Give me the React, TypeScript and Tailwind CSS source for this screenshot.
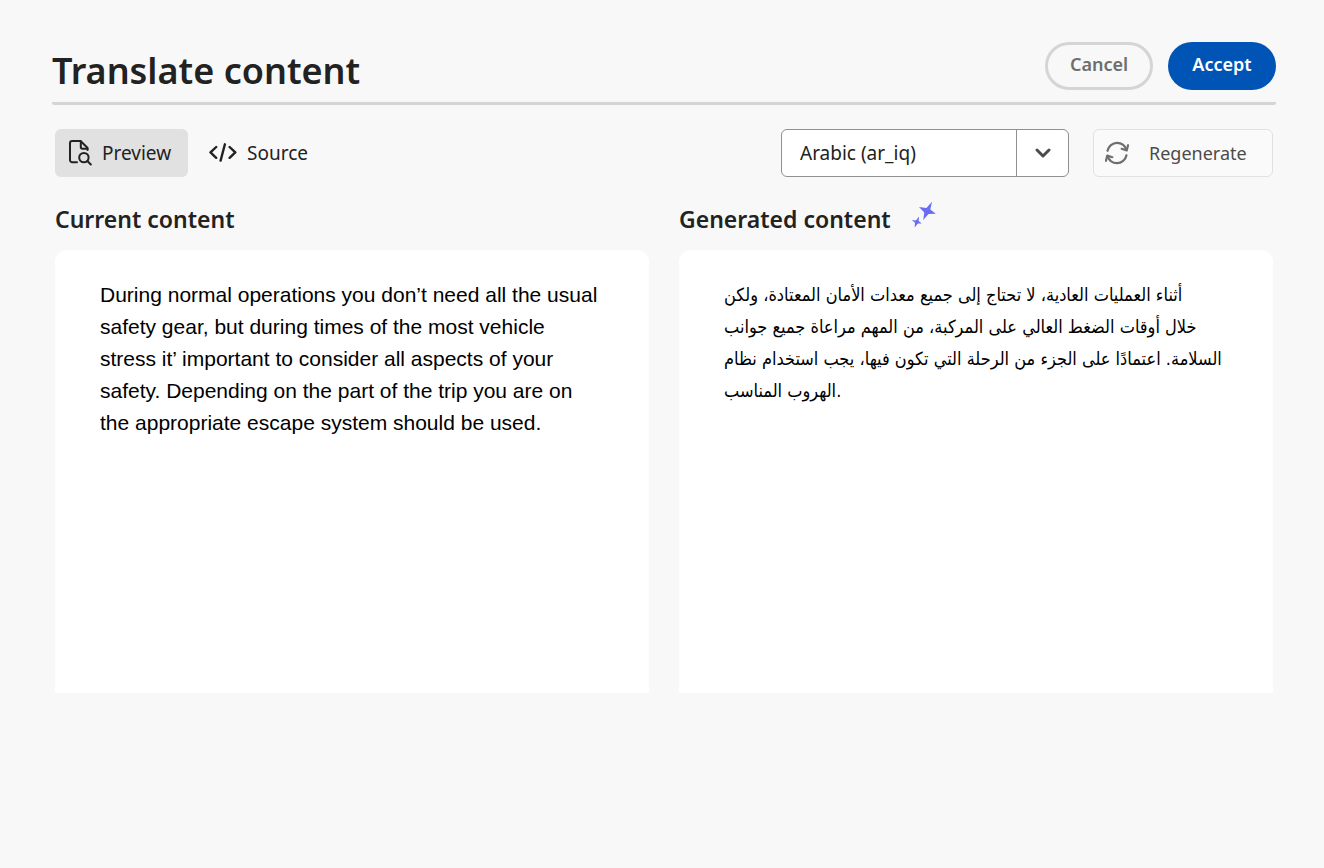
import { useState } from 'react';

const currentLines = [
  'During normal operations you don’t need all the usual',
  'safety gear, but during times of the most vehicle',
  'stress it’ important to consider all aspects of your',
  'safety. Depending on the part of the trip you are on',
  'the appropriate escape system should be used.',
];

const generatedLines = [
  'أثناء العمليات العادية، لا تحتاج إلى جميع معدات الأمان المعتادة، ولكن',
  'خلال أوقات الضغط العالي على المركبة، من المهم مراعاة جميع جوانب',
  'السلامة. اعتمادًا على الجزء من الرحلة التي تكون فيها، يجب استخدام نظام',
  'الهروب المناسب.',
];

function PreviewIcon() {
  return (
    <svg className="h-[26px] w-6 shrink-0" viewBox="0 0 24 26" fill="none" stroke="currentColor" strokeWidth="2" strokeLinecap="round" strokeLinejoin="round" aria-hidden="true">
      <path d="M9 22.300H4.200A2.200 2.200 0 0 1 2 20.100V3.200A2.200 2.200 0 0 1 4.200 1H12.600L19.600 8V10" />
      <path d="M12.800 1.500V7a1.800 1.800 0 0 0 1.800 1.800H19.300" />
      <circle cx="15.900" cy="17.600" r="4.700" />
      <path d="M19.400 21 22.800 24.500" />
    </svg>
  );
}

function SourceIcon() {
  return (
    <svg className="h-5 w-7 shrink-0" viewBox="0 0 28 20" fill="none" stroke="currentColor" strokeWidth="2.400" strokeLinecap="round" strokeLinejoin="round" aria-hidden="true">
      <path d="M7.200 4 1.500 9.400 7.200 14.800M20.600 4 26.300 9.400 20.600 14.800M15.900 1.300 11.600 17.600" />
    </svg>
  );
}

function RefreshIcon() {
  return (
    <svg className="size-6 shrink-0" viewBox="0 0 24 24" fill="none" stroke="currentColor" strokeWidth="2.200" strokeLinecap="round" strokeLinejoin="round" aria-hidden="true">
      <path d="M2.500 9.800C3.500 5.200 7.400 1.800 12 1.800c4.300 0 8 2.800 9.500 7" />
      <path d="M23.100 4.200 21.700 9.400 16.700 7.800" />
      <path d="M21.500 14.200C20.500 18.800 16.600 22.200 12 22.200c-4.300 0-8-2.800-9.500-7" />
      <path d="M.9 19.800 2.300 14.600 7.300 16.200" />
    </svg>
  );
}

function SparkleIcon() {
  return (
    <svg className="h-9 w-[25px] shrink-0 text-[#6a6cf4]" viewBox="0 0 25 36" fill="currentColor" aria-hidden="true">
      <path d="M21 .8L19.300 8.400L24.800 12.800L17.500 13L12.200 19L13.300 11.400L8 6L15.400 7Z" />
      <path d="M8 15.400L7.700 20L10.800 22.600L6.900 22.500L3.600 26.400L4 21.800L.8 19L4.900 19.400Z" />
    </svg>
  );
}

export default function App() {
  const [tab, setTab] = useState('preview');
  const tabClass = 'flex h-12 items-center gap-2.5 rounded-md px-[13px] text-[19px] text-[#222]';

  return (
    <div className="min-h-screen bg-[#f8f8f8] px-12 pt-[42px] font-['Noto_Sans','Open_Sans',sans-serif] text-[#222]">
      <header className="ml-1 flex h-[63px] items-start justify-between rounded-b-xs border-b-3 border-[#d5d5d5]">
        <h1 className="text-4xl leading-[58px] font-semibold">Translate content</h1>
        <div className="flex gap-[15px]">
          <button className="h-12 w-27 rounded-full border-3 border-[#d5d5d5] pb-1 text-lg font-semibold text-[#6e6e6e]">Cancel</button>
          <button className="h-12 w-27 rounded-full bg-[#0054b6] pb-1 text-lg font-semibold text-white">Accept</button>
        </div>
      </header>

      <main className="mr-[3px] ml-[7px]">
        <div className="mt-6 flex items-center justify-between">
          <div className="flex gap-2">
            <button aria-pressed={tab === 'preview'} onClick={() => setTab('preview')} className={`${tabClass} min-w-[133px] ${tab === 'preview' ? 'bg-[#e1e1e1]' : ''}`}>
              <PreviewIcon />
              Preview
            </button>
            <button aria-pressed={tab === 'source'} onClick={() => setTab('source')} className={`${tabClass} ${tab === 'source' ? 'bg-[#e1e1e1]' : ''}`}>
              <SourceIcon />
              Source
            </button>
          </div>
          <div className="flex gap-6">
            <div className="relative">
              <select aria-label="Language" defaultValue="ar_iq" className="h-12 w-72 appearance-none rounded-md border border-[#909090] bg-white pr-14 pl-[18px] text-[19px] text-[#222]">
                <option value="ar_iq">Arabic (ar_iq)</option>
              </select>
              <span className="pointer-events-none absolute inset-y-0 right-0 flex w-[53px] items-center justify-center border-l border-[#909090]">
                <svg className="h-3 w-4 text-[#4b4b4b]" viewBox="0 0 16 12" fill="none" stroke="currentColor" strokeWidth="3" strokeLinecap="round" strokeLinejoin="round" aria-hidden="true">
                  <path d="m2 3 6 6 6-6" />
                </svg>
              </span>
            </div>
            <button className="flex h-12 w-45 items-center gap-5 rounded-md border border-[#e1e1e1] bg-[#fafafa] pl-[11px] text-lg text-[#4b4b4b]">
              <span className="text-[#6e6e6e]"><RefreshIcon /></span>
              Regenerate
            </button>
          </div>
        </div>

        <div className="mt-6 grid grid-cols-2 gap-[30px]">
          <section>
            <h2 className="flex h-9 items-center text-[23px] font-semibold">Current content</h2>
            <div className="mt-[13px] min-h-[443px] rounded-t-xl bg-white px-[45px] pt-[29px]">
              <p className="font-['Liberation_Sans',Arial,sans-serif] text-[21px] leading-8 text-black">
                {currentLines.map((line) => (
                  <span key={line} className="block whitespace-nowrap">{line}</span>
                ))}
              </p>
            </div>
          </section>
          <section>
            <h2 className="flex h-9 items-center gap-5 text-[23px] font-semibold">
              Generated content
              <SparkleIcon />
            </h2>
            <div className="mt-[13px] min-h-[443px] rounded-t-xl bg-white px-[45px] pt-[29px]">
              <p lang="ar" className="font-['DejaVu_Sans_Condensed','DejaVu_Sans',sans-serif] text-lg leading-8 text-black">
                {generatedLines.map((line) => (
                  <span key={line} className="block whitespace-nowrap">{line}</span>
                ))}
              </p>
            </div>
          </section>
        </div>
      </main>
    </div>
  );
}
